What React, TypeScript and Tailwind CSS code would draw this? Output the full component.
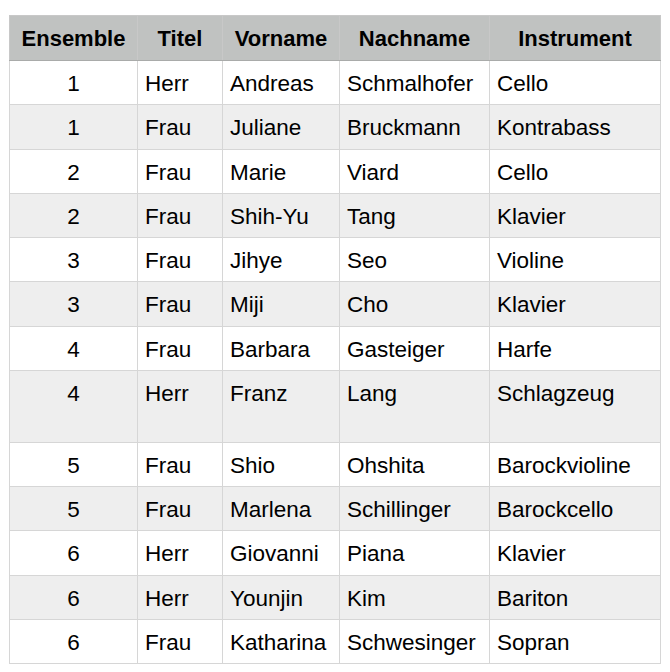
import React from "react";

type Row = {
  ensemble: number;
  titel: string;
  vorname: string;
  nachname: string;
  instrument: string;
  tall?: boolean;
};

const rows: Row[] = [
  { ensemble: 1, titel: "Herr", vorname: "Andreas", nachname: "Schmalhofer", instrument: "Cello" },
  { ensemble: 1, titel: "Frau", vorname: "Juliane", nachname: "Bruckmann", instrument: "Kontrabass" },
  { ensemble: 2, titel: "Frau", vorname: "Marie", nachname: "Viard", instrument: "Cello" },
  { ensemble: 2, titel: "Frau", vorname: "Shih-Yu", nachname: "Tang", instrument: "Klavier" },
  { ensemble: 3, titel: "Frau", vorname: "Jihye", nachname: "Seo", instrument: "Violine" },
  { ensemble: 3, titel: "Frau", vorname: "Miji", nachname: "Cho", instrument: "Klavier" },
  { ensemble: 4, titel: "Frau", vorname: "Barbara", nachname: "Gasteiger", instrument: "Harfe" },
  { ensemble: 4, titel: "Herr", vorname: "Franz", nachname: "Lang", instrument: "Schlagzeug", tall: true },
  { ensemble: 5, titel: "Frau", vorname: "Shio", nachname: "Ohshita", instrument: "Barockvioline" },
  { ensemble: 5, titel: "Frau", vorname: "Marlena", nachname: "Schillinger", instrument: "Barockcello" },
  { ensemble: 6, titel: "Herr", vorname: "Giovanni", nachname: "Piana", instrument: "Klavier" },
  { ensemble: 6, titel: "Herr", vorname: "Younjin", nachname: "Kim", instrument: "Bariton" },
  { ensemble: 6, titel: "Frau", vorname: "Katharina", nachname: "Schwesinger", instrument: "Sopran" },
];

const cell = "border border-[#d6d6d6] align-top px-[7px] pt-[10px] leading-[25px] whitespace-nowrap text-[22.5px]";

const App = () => {
  return (
    <div className="min-h-screen bg-white pl-[9px] pt-[15px] text-[22px] text-black font-['Liberation_Sans',Arial,sans-serif]">
      <table className="table-fixed border-collapse w-[651px]">
        <colgroup>
          <col className="w-[128px]" />
          <col className="w-[85px]" />
          <col className="w-[117px]" />
          <col className="w-[150px]" />
          <col className="w-[171px]" />
        </colgroup>
        <thead>
          <tr className="h-[45px] bg-[#c0c2c1]">
            {["Ensemble", "Titel", "Vorname", "Nachname", "Instrument"].map((h) => (
              <th
                key={h}
                className="border border-[#c8c8c8] border-b-[#a9abaa] align-top pt-[10px] leading-[25px] font-bold text-center whitespace-nowrap"
              >
                {h}
              </th>
            ))}
          </tr>
        </thead>
        <tbody>
          {rows.map((r, i) => (
            <tr
              key={i}
              className={`${r.tall ? "h-[72px]" : "h-[44.25px]"} ${i % 2 === 1 ? "bg-[#eeeeee]" : "bg-white"}`}
            >
              <td className={`${cell} text-center`}>{r.ensemble}</td>
              <td className={cell}>{r.titel}</td>
              <td className={cell}>{r.vorname}</td>
              <td className={cell}>{r.nachname}</td>
              <td className={cell}>{r.instrument}</td>
            </tr>
          ))}
        </tbody>
      </table>
    </div>
  );
};

export default App;
